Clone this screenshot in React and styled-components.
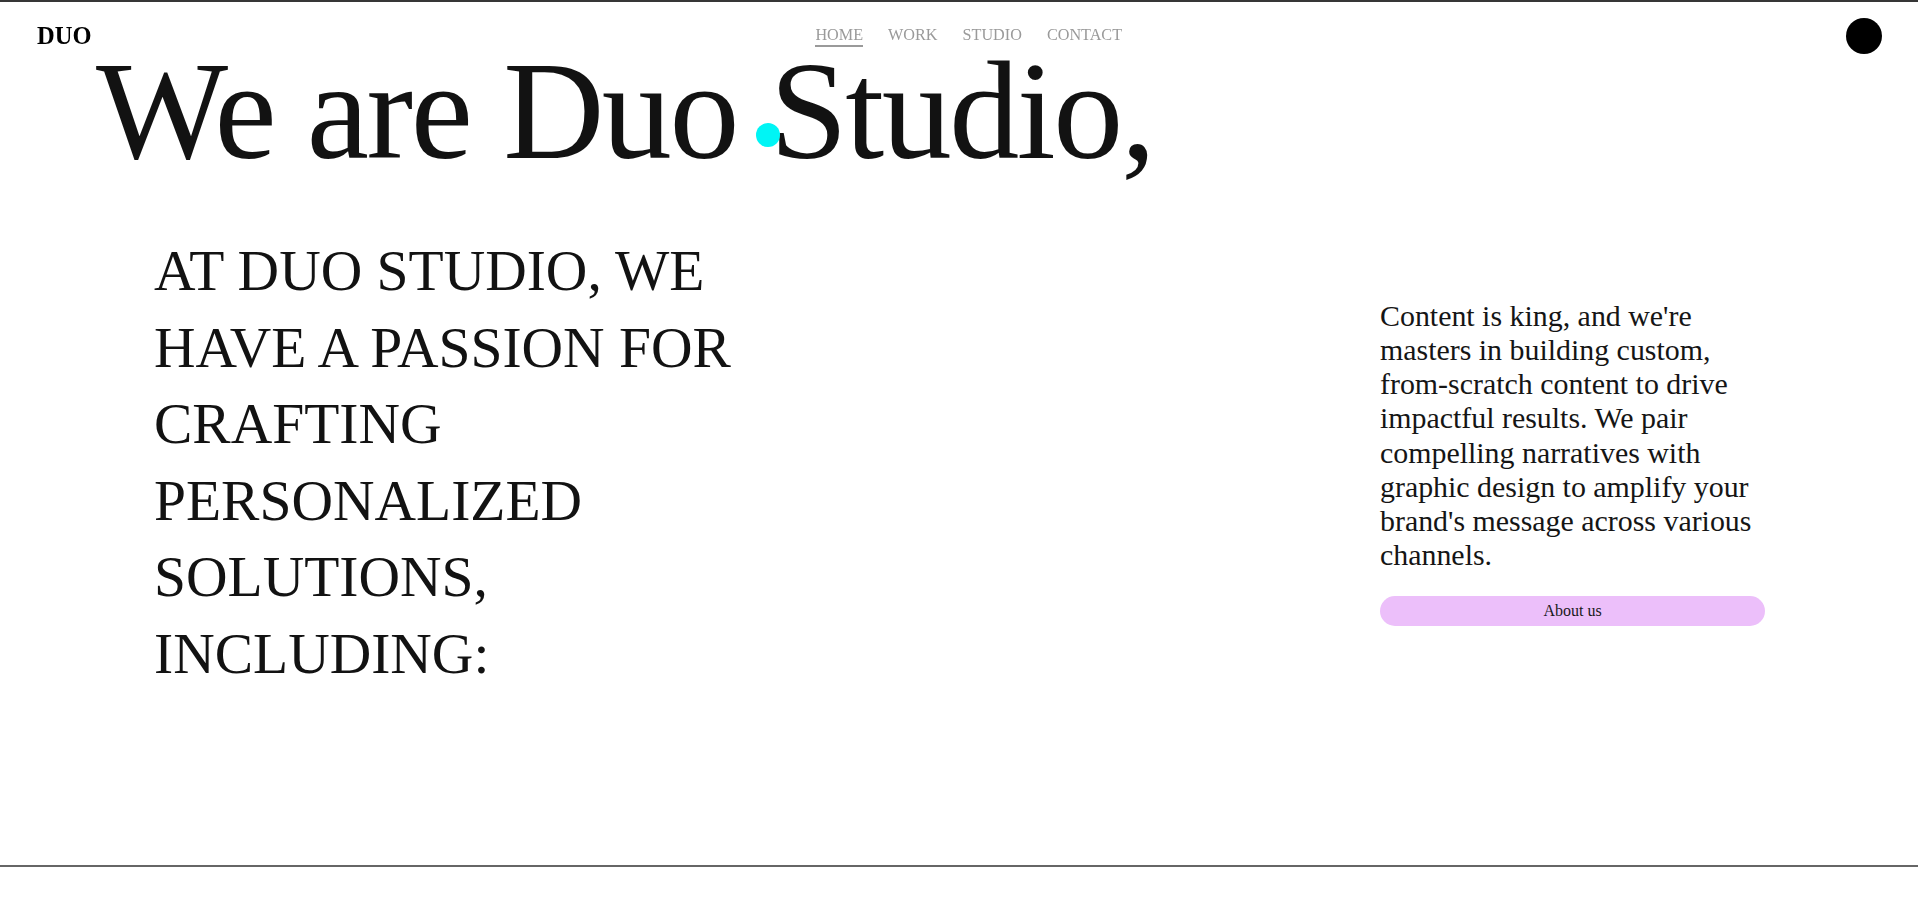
import React from "react";
import styled, { createGlobalStyle } from "styled-components";

const GlobalStyle = createGlobalStyle`
  html, body {
    margin: 0;
    padding: 0;
    background: #ffffff;
  }
  body {
    font-family: "Liberation Serif", "Times New Roman", serif;
    color: #111111;
    overflow: hidden;
  }
  * { box-sizing: border-box; }
`;

const Header = styled.header`
  position: fixed;
  top: 0;
  left: 0;
  right: 0;
  z-index: 10;
  display: flex;
  align-items: center;
  justify-content: space-between;
  padding: 18px 36px 0 37px;
`;

const Logo = styled.div`
  font-size: 24.5px;
  font-weight: 700;
  color: #000;
  line-height: normal;
`;

const Nav = styled.nav`
  display: flex;
  align-items: center;
  gap: 25px;
`;

const NavLink = styled.a`
  font-size: 16.2px;
  line-height: normal;
  color: #9a9a9a;
  text-decoration: none;
  text-transform: uppercase;
  border-bottom: 2px solid ${(p) => (p.$active ? "#9a9a9a" : "transparent")};
`;

const Avatar = styled.div`
  width: 36px;
  height: 36px;
  border-radius: 50%;
  background: #000;
`;

const Hero = styled.section`
  position: relative;
  height: 867px;
  border-top: 2px solid #363636;
  border-bottom: 2px solid #666666;
  padding-top: 49px;
`;

const Title = styled.h1`
  margin: 0;
  padding-left: 96px;
  font-size: 140px;
  font-weight: 400;
  line-height: 0.85;
  letter-spacing: -2.4px;
  color: #121212;
  white-space: nowrap;
`;

const Row = styled.div`
  display: flex;
  align-items: center;
  justify-content: space-between;
  margin-top: 63px;
  padding: 0 153px 0 154px;
`;

const Statement = styled.p`
  margin: 0;
  width: 620px;
  font-size: 57.5px;
  line-height: 76.5px;
  text-transform: uppercase;
  color: #121212;
`;

const Aside = styled.div`
  width: 385px;
  display: flex;
  flex-direction: column;
  gap: 24px;
`;

const Copy = styled.p`
  margin: 0;
  font-size: 29.9px;
  line-height: 34.1px;
  color: #151515;
`;

const PillButton = styled.button`
  width: 100%;
  height: 30px;
  border: none;
  border-radius: 15px;
  background: #ecbffa;
  font-family: "Liberation Serif", "Times New Roman", serif;
  font-size: 16px;
  color: #1a1a1a;
  cursor: pointer;
`;

const CursorDot = styled.div`
  position: absolute;
  left: 756px;
  top: 121px;
  width: 24px;
  height: 24px;
  border-radius: 50%;
  background: #00f5f5;
  z-index: 5;
`;

const links = ["Home", "Work", "Studio", "Contact"];

export default function App() {
  return (
    <>
      <GlobalStyle />
      <Header>
        <Logo>DUO</Logo>
        <Nav>
          {links.map((l, i) => (
            <NavLink key={l} href="#" $active={i === 0}>
              {l}
            </NavLink>
          ))}
        </Nav>
        <Avatar />
      </Header>
      <Hero>
        <Title>We are Duo Studio,</Title>
        <Row>
          <Statement>
            At Duo Studio, we have a passion for crafting personalized
            solutions, including:
          </Statement>
          <Aside>
            <Copy>
              Content is king, and we're masters in building custom,
              from-scratch content to drive impactful results. We pair
              compelling narratives with graphic design to amplify your
              brand's message across various channels.
            </Copy>
            <PillButton>About us</PillButton>
          </Aside>
        </Row>
        <CursorDot />
      </Hero>
    </>
  );
}
